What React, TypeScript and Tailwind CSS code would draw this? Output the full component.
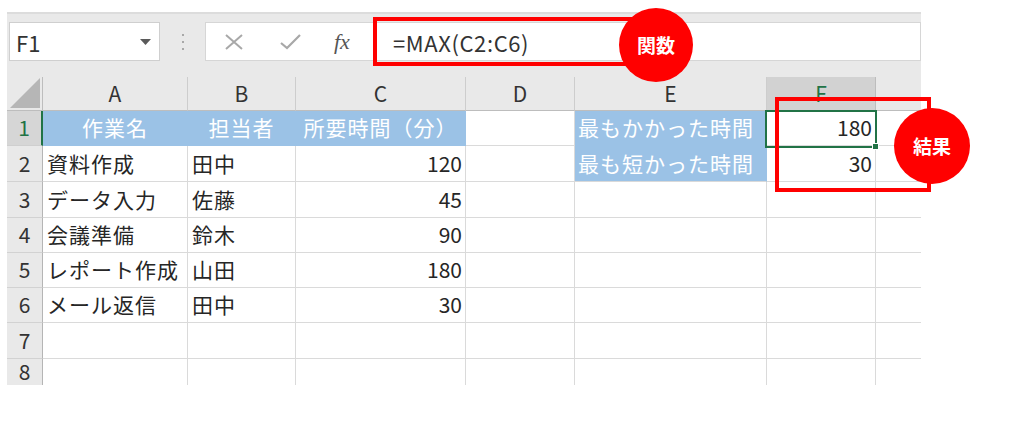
import React from "react";

type Cell = { t?: string; kind?: "hdr" | "lbl" | "num" | "txt" };

const widths = ["w-[145px]", "w-[108px]", "w-[170px]", "w-[109px]", "w-[192px]", "w-[109px]"];
const colLetters = ["A", "B", "C", "D", "E", "F"];
const heights = ["h-[35px]", "h-[36px]", "h-[36px]", "h-[35px]", "h-[35px]", "h-[35px]", "h-[36px]", "h-[35px]"];

const rows: Cell[][] = [
  [{ t: "作業名", kind: "hdr" }, { t: "担当者", kind: "hdr" }, { t: "所要時間（分）", kind: "hdr" }, {}, { t: "最もかかった時間", kind: "lbl" }, { t: "180", kind: "num" }],
  [{ t: "資料作成", kind: "txt" }, { t: "田中", kind: "txt" }, { t: "120", kind: "num" }, {}, { t: "最も短かった時間", kind: "lbl" }, { t: "30", kind: "num" }],
  [{ t: "データ入力", kind: "txt" }, { t: "佐藤", kind: "txt" }, { t: "45", kind: "num" }, {}, {}, {}],
  [{ t: "会議準備", kind: "txt" }, { t: "鈴木", kind: "txt" }, { t: "90", kind: "num" }, {}, {}, {}],
  [{ t: "レポート作成", kind: "txt" }, { t: "山田", kind: "txt" }, { t: "180", kind: "num" }, {}, {}, {}],
  [{ t: "メール返信", kind: "txt" }, { t: "田中", kind: "txt" }, { t: "30", kind: "num" }, {}, {}, {}],
  [{}, {}, {}, {}, {}, {}],
  [{}, {}, {}, {}, {}, {}],
];

function cellClass(c: Cell, r: number) {
  const base = "shrink-0 flex items-center whitespace-nowrap overflow-hidden border-r border-b ";
  if (c.kind === "hdr") return base + "justify-center tracking-[1px] bg-[#9bc2e6] border-[#9bc2e6] text-white";
  if (c.kind === "lbl") {
    return base + "pl-[3px] tracking-[1px] bg-[#9bc2e6] text-white " + (r === 0 ? "border-[#9bc2e6]" : "border-r-[#9bc2e6] border-b-[#d9d9d9]");
  }
  if (c.kind === "num") return base + "justify-end pr-[3px] bg-white border-[#dadada] text-[#262626]";
  if (c.kind === "txt") return base + "pl-[4px] tracking-[1px] bg-white border-[#dadada] text-[#262626]";
  return base + "bg-white border-[#dadada]";
}

export default function App() {
  return (
    <div className="w-[1024px] h-[426px] bg-white relative overflow-hidden font-['Noto_Sans_CJK_JP','Noto_Sans',sans-serif]">
      <div className="ml-[7px] mt-[12px] w-[914px] h-[373px] bg-[#e9e9e9] border-t-2 border-[#dcdcdc] flex flex-col overflow-hidden">
        {/* toolbar */}
        <div className="flex mt-[8px] h-[39px] shrink-0">
          <div className="ml-[2px] w-[151px] h-full bg-white border border-[#cfcfcf] flex items-center justify-between pl-[6px] pr-[8px]">
            <span className="text-[22px] text-[#333] leading-none">F1</span>
            <svg width="11" height="6" viewBox="0 0 11 6"><path d="M0 0 H11 L5.5 6 Z" fill="#5a5a5a" /></svg>
          </div>
          <div className="w-[45px] flex flex-col items-center justify-center gap-[5px]">
            <div className="w-[2px] h-[2px] bg-[#a8a8a8]" />
            <div className="w-[2px] h-[2px] bg-[#a8a8a8]" />
            <div className="w-[2px] h-[2px] bg-[#a8a8a8]" />
          </div>
          <div className="flex-1 h-full bg-white border border-[#d6d6d6] flex items-center">
            <svg className="ml-[19px]" width="18" height="16" viewBox="0 0 18 16">
              <path d="M1 1 L17 15 M17 1 L1 15" stroke="#a8a8a8" strokeWidth="2" fill="none" />
            </svg>
            <svg className="ml-[37px]" width="21" height="16" viewBox="0 0 21 16">
              <path d="M1 9 L7 14 L20 1" stroke="#a8a8a8" strokeWidth="2.2" fill="none" />
            </svg>
            <span className="ml-[33px] font-['Liberation_Serif',serif] italic text-[22px] text-[#555] leading-none">fx</span>
            <span className="ml-[43px] text-[22px] text-[#333] leading-none tracking-[0.6px]">=MAX(C2:C6)</span>
          </div>
        </div>
        {/* column headers */}
        <div className="flex mt-[16px] h-[34px] shrink-0">
          <div className="w-[36px] h-full shrink-0 border-r border-b border-[#bdbdbd] flex items-end justify-end pr-[2px] pb-[2px]">
            <svg width="30" height="30" viewBox="0 0 30 30"><path d="M30 0 V30 H0 Z" fill="#b6b6b6" /></svg>
          </div>
          {colLetters.map((l, i) => (
            <div
              key={l}
              className={
                widths[i] +
                " h-full shrink-0 flex items-center justify-center text-[21px] border-r border-b " +
                (l === "F" ? "bg-[#d2d2d2] text-[#217346] border-r-[#bdbdbd] border-b-[#217346]" : "text-[#333] border-r-[#cdcdcd] border-b-[#bdbdbd]")
              }
            >
              {l}
            </div>
          ))}
          <div className="flex-1 h-full border-b border-[#bdbdbd]" />
        </div>
        {/* rows */}
        {rows.map((row, r) => (
          <div key={r} className={"flex shrink-0 text-[21px] " + heights[r]}>
            <div
              className={
                "w-[36px] h-full shrink-0 flex items-center justify-center border-b " +
                (r === 0
                  ? "bg-[#d6d6d6] text-[#217346] border-r-2 border-r-[#217346] border-b-[#cfcfcf]"
                  : "bg-[#e9e9e9] text-[#333] border-r border-r-[#b5b5b5] border-b-[#d2d2d2]") +
                (r === 7 ? " pb-[8px]" : "")
              }
            >
              {r + 1}
            </div>
            {row.map((c, ci) => (
              <div key={ci} className={widths[ci] + " h-full " + cellClass(c, r)}>
                {c.t}
              </div>
            ))}
            <div className="flex-1 h-full bg-white border-b border-[#dadada]" />
          </div>
        ))}
      </div>

      {/* selected cell F1 */}
      <div className="absolute left-[765px] top-[110px] w-[112px] h-[38px] border-2 border-[#217346]" />
      <div className="absolute left-[872px] top-[143px] w-[7px] h-[7px] bg-[#217346] border border-white" />

      {/* annotation: formula */}
      <div className="absolute left-[373px] top-[17px] w-[270px] h-[49px] border-4 border-[#ff0000]" />
      <div className="absolute left-[619px] top-[8px] w-[74px] h-[74px] rounded-full bg-[#ff0000] flex items-center justify-center text-white font-bold text-[19px]">
        関数
      </div>

      {/* annotation: result */}
      <div className="absolute left-[775px] top-[97px] w-[156px] h-[95px] border-4 border-[#ff0000]" />
      <div className="absolute left-[894px] top-[108px] w-[76px] h-[76px] rounded-full bg-[#ff0000] flex items-center justify-center text-white font-bold text-[19px]">
        結果
      </div>
    </div>
  );
}
